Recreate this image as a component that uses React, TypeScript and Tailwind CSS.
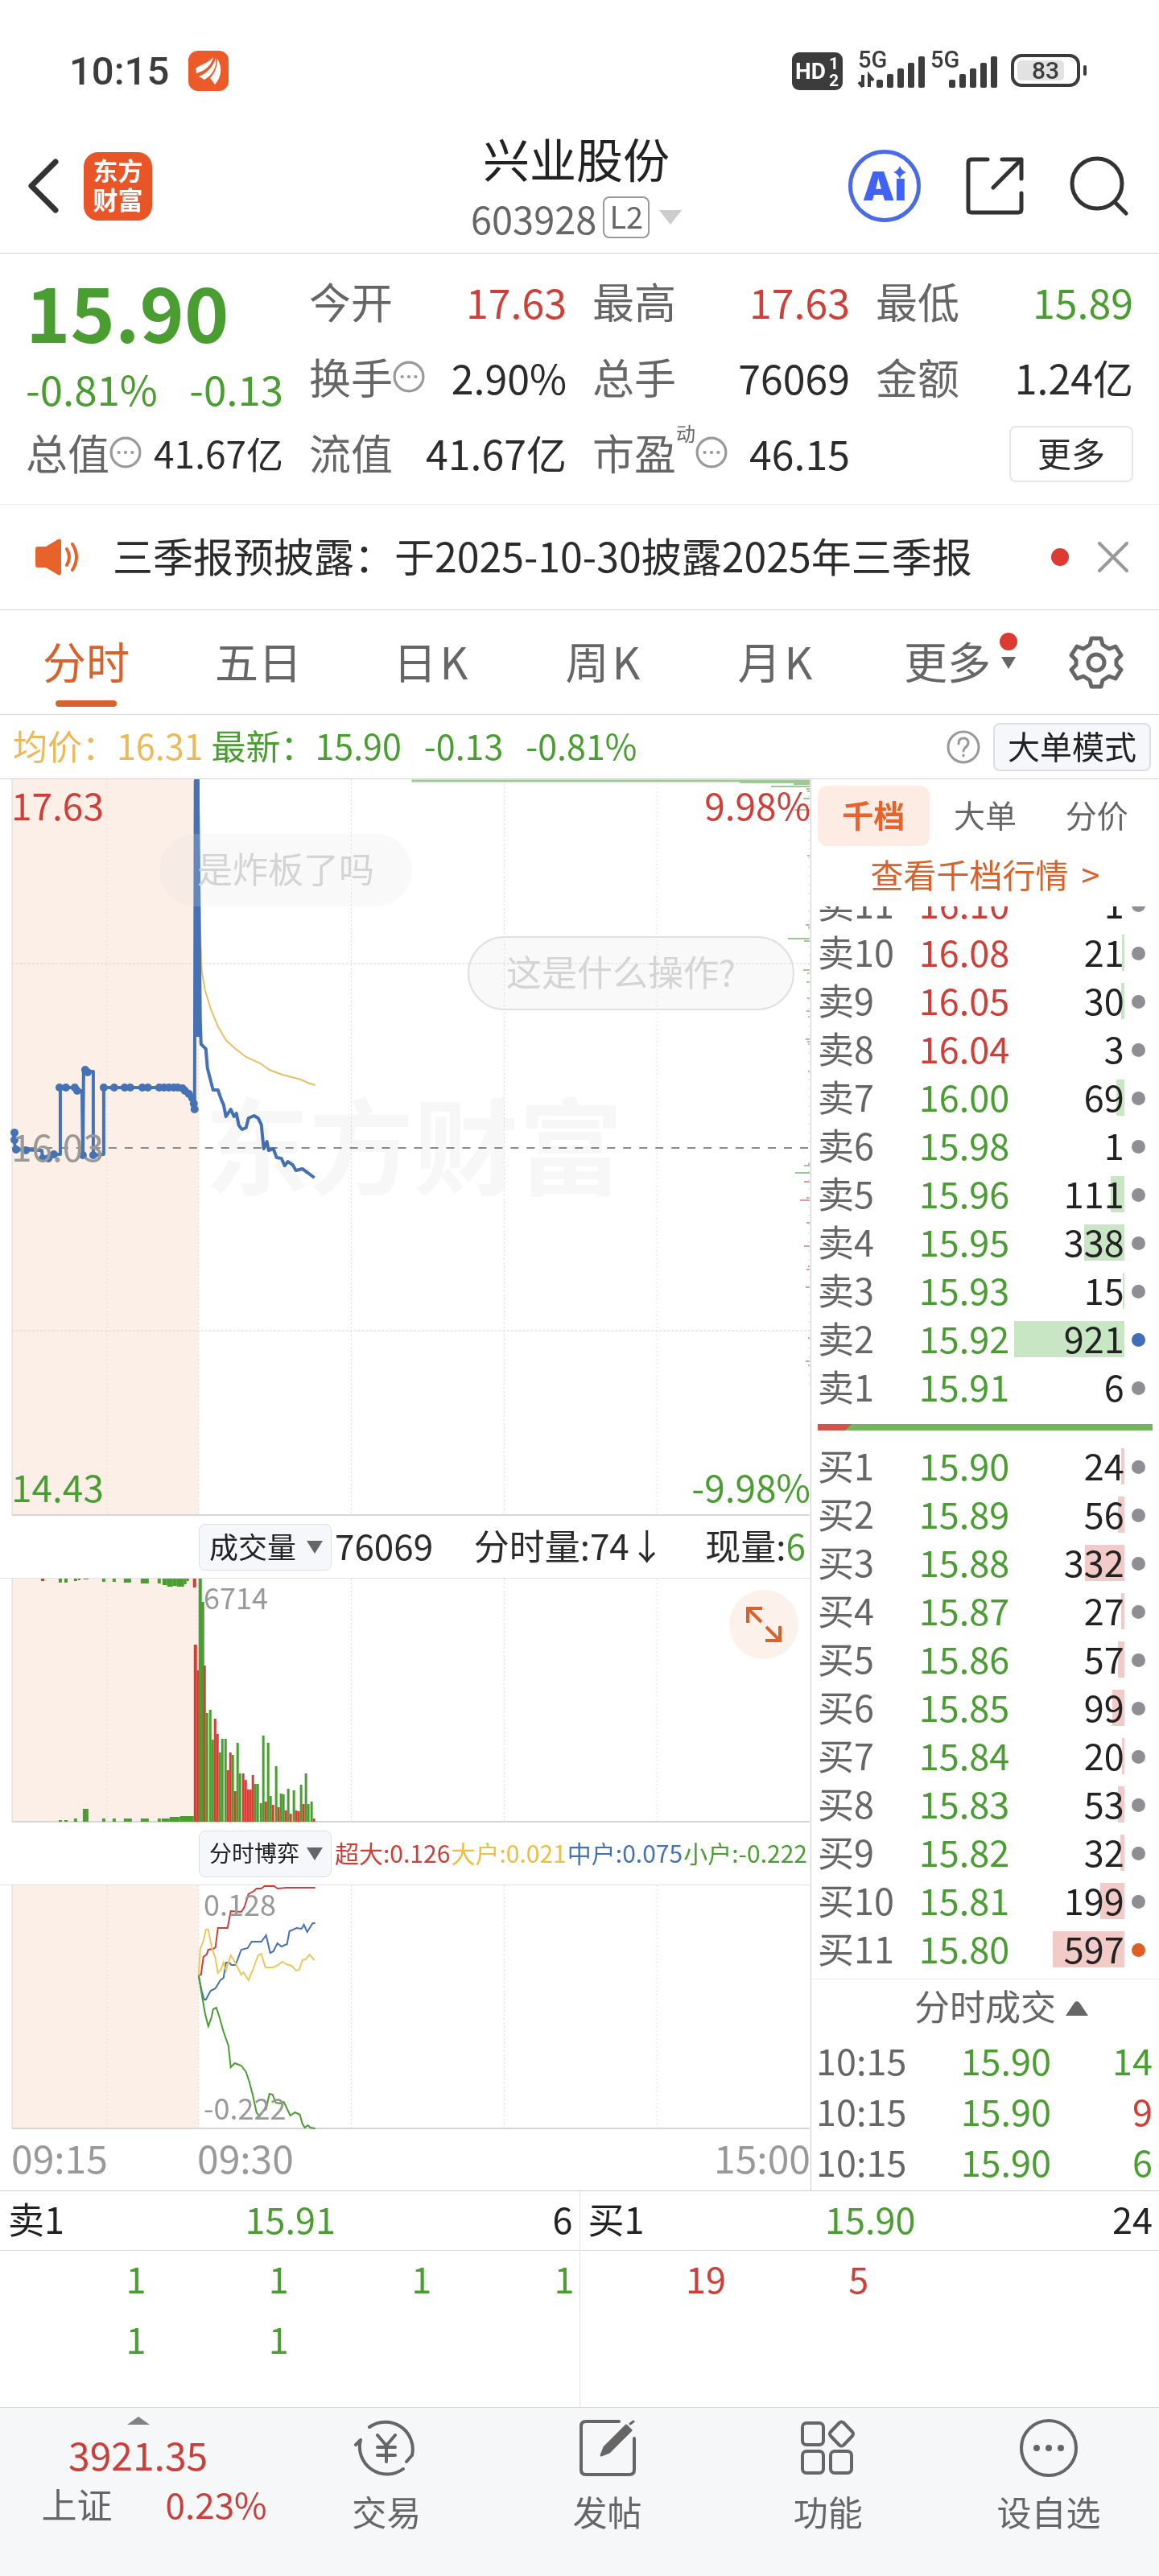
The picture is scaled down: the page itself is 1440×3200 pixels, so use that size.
import React, { useState } from "react";

const RED = "#c9403a";
const GREEN = "#4a9d31";

type Tone = "red" | "green" | "dark";
const toneClass: Record<Tone, string> = {
  red: "text-[#cf3f38]",
  green: "text-[#4a9d31]",
  dark: "text-[#2b2b2b]",
};

/* ---------- status bar ---------- */

function Signal({ data }: { data?: boolean }) {
  return (
    <svg width="84" height="50" viewBox="0 0 84 50" className="overflow-visible" aria-hidden="true">
      <text x="0" y="21" fontFamily="Roboto, sans-serif" fontWeight="500" fontSize="29" fill="#3c3c3c">
        5G
      </text>
      {data && (
        <g stroke="#3c3c3c" strokeWidth="4" fill="none">
          <path d="M6 30v15M1 39l5 6" />
          <path d="M14 45V31l5 6" />
        </g>
      )}
      <g fill="#3c3c3c">
        <rect x="23" y="36" width="8" height="10" rx="2" />
        <rect x="36" y="29" width="8" height="17" rx="2" />
        <rect x="49" y="22" width="8" height="24" rx="2" />
        <rect x="62" y="15" width="8" height="31" rx="2" />
        <rect x="75" y="7" width="8" height="39" rx="2" />
      </g>
    </svg>
  );
}

function StatusBar() {
  return (
    <div className="flex h-[148px] items-center justify-between pt-7 pr-[88px] pl-[86px]">
      <div className="flex items-center gap-6">
        <span className="font-['Roboto'] text-[49px] leading-none font-medium text-[#3c3c3c]">10:15</span>
        <svg width="50" height="50" viewBox="0 0 50 50" aria-hidden="true">
          <rect width="50" height="50" rx="12" fill="#ec5a2a" />
          <g fill="#fff">
            <path d="M9 22C15 17 24 16 31 8c-2 9-8 16-21 20z" />
            <path d="M13 32C23 28 31 20 34 9c2 12-5 22-14 27z" />
            <path d="M27 34c6-6 9-15 9-24 7 11 5 23-3 32z" />
          </g>
        </svg>
      </div>
      <div className="flex items-center">
        <svg width="64" height="48" viewBox="0 0 64 48" aria-hidden="true">
          <rect width="63" height="47" y="1" rx="9" fill="#3c3c3c" />
          <g fill="#fff" fontFamily="Roboto, sans-serif" fontWeight="700">
            <text x="4" y="34" fontSize="28">HD</text>
            <text x="46" y="22" fontSize="21">1</text>
            <text x="46" y="43" fontSize="21">2</text>
          </g>
        </svg>
        <span className="ml-[18px] flex gap-1.5">
          <Signal data />
          <Signal />
        </span>
        <svg className="ml-4" width="96" height="42" viewBox="0 0 96 42" aria-hidden="true">
          <rect x="2" y="2" width="82" height="37" rx="11" fill="none" stroke="#3c3c3c" strokeWidth="4" />
          <rect x="8" y="8" width="58" height="25" rx="5" fill="#e2e2e2" />
          <rect x="90" y="14" width="4" height="13" rx="2" fill="#3c3c3c" />
          <text x="43" y="31" textAnchor="middle" fontFamily="Roboto, sans-serif" fontWeight="500" fontSize="30" fill="#3c3c3c">
            83
          </text>
        </svg>
      </div>
    </div>
  );
}

/* ---------- header ---------- */

function Header() {
  return (
    <header className="grid h-[167px] grid-cols-[1fr_auto_1fr] items-center border-b border-[#d6d6d6] pr-[38px] pl-[30px]">
      <div className="flex items-center gap-7">
        <button aria-label="返回">
          <svg width="46" height="72" viewBox="0 0 46 72" fill="none" stroke="#333" strokeWidth="7" strokeLinecap="round" strokeLinejoin="round">
            <path d="M39 6 9 36l30 30" />
          </svg>
        </button>
        <div className="grid size-[85px] place-content-center rounded-[18px] bg-[#ea5528] pb-1 text-center text-[31px] leading-[36px] font-bold text-white">
          <span>东方</span>
          <span>财富</span>
        </div>
      </div>
      <div className="pt-1 text-center">
        <h1 className="text-[58px] leading-[74px] text-[#222]">兴业股份</h1>
        <div className="flex h-[74px] items-center justify-center gap-2 text-[47px] text-[#666]">
          <span className="leading-none">603928</span>
          <span className="flex h-[52px] items-center rounded-lg border-2 border-[#999] px-1.5 pb-1 text-[38px] leading-none">L2</span>
          <svg className="ml-1" width="28" height="18" viewBox="0 0 28 18" aria-hidden="true">
            <path d="M0 0h28L14 18z" fill="#ccc" />
          </svg>
        </div>
      </div>
      <div className="flex items-center justify-end gap-14">
        <button aria-label="AI 助手" className="relative flex size-[90px] items-center justify-center rounded-full border-[5px] border-[#4a6be8]">
          <span className="font-['Inter'] text-[50px] leading-none font-black text-[#4062f5]">Ai</span>
          <svg className="absolute top-[15px] right-[13px] bg-white" width="16" height="16" viewBox="0 0 16 16" aria-hidden="true">
            <path d="M8 0q2 6 8 8-6 2-8 8-2-6-8-8 6-2 8-8z" fill="#4062f5" />
          </svg>
        </button>
        <button aria-label="分享">
          <svg width="72" height="72" viewBox="0 0 72 72" fill="none" stroke="#333" strokeWidth="5" strokeLinecap="round" strokeLinejoin="round">
            <path d="M27 3H7q-4 0-4 4v58q0 4 4 4h58q4 0 4-4V45" />
            <path d="M45 3h24v24M69 3 34 38" />
          </svg>
        </button>
        <button aria-label="搜索">
          <svg width="74" height="74" viewBox="0 0 74 74" fill="none" stroke="#333" strokeWidth="5" strokeLinecap="round">
            <circle cx="35" cy="34" r="31" />
            <path d="m57 57 14 14" />
          </svg>
        </button>
      </div>
    </header>
  );
}

/* ---------- key figures ---------- */

function InfoDots() {
  return (
    <svg width="40" height="40" viewBox="0 0 38 38" aria-hidden="true">
      <circle cx="19" cy="19" r="17" fill="none" stroke="#999" strokeWidth="3" />
      <g fill="#999">
        <circle cx="11" cy="19" r="2" />
        <circle cx="19" cy="19" r="2" />
        <circle cx="27" cy="19" r="2" />
      </g>
    </svg>
  );
}

function Stat({ label, value, tone = "dark", info, sup, small }: { label: string; value: string; tone?: Tone; info?: boolean; sup?: string; small?: boolean }) {
  return (
    <div className="flex h-[94px] items-center justify-between pb-1 leading-none whitespace-nowrap">
      <span className="flex items-center text-[52px] text-[#666]">
        {label}
        {sup && <sup className="mb-6 self-start text-2xl">{sup}</sup>}
        {info && <InfoDots />}
      </span>
      <span className={`${small ? "text-[46px]" : "text-[50px]"} ${toneClass[tone]}`}>{value}</span>
    </div>
  );
}

function Figures() {
  return (
    <section className="grid grid-cols-4 gap-x-8 border-b border-[#eaeaea] px-8 pt-[14px] pb-[15px]">
      <div>
        <div className="flex h-[124px] items-center pb-3 text-[94px] leading-none font-bold text-[#4a9d31]">15.90</div>
        <div className="flex h-16 items-center justify-between pb-1.5 text-[51px] leading-none text-[#4a9d31]">
          <span>-0.81%</span>
          <span>-0.13</span>
        </div>
        <Stat label="总值" value="41.67亿" info small />
      </div>
      <div>
        <Stat label="今开" value="17.63" tone="red" />
        <Stat label="换手" value="2.90%" info />
        <Stat label="流值" value="41.67亿" />
      </div>
      <div>
        <Stat label="最高" value="17.63" tone="red" />
        <Stat label="总手" value="76069" />
        <Stat label="市盈" value="46.15" sup="动" info />
      </div>
      <div>
        <Stat label="最低" value="15.89" tone="green" />
        <Stat label="金额" value="1.24亿" />
        <div className="flex h-[94px] items-center justify-end">
          <button className="h-[70px] w-[154px] rounded-lg border-2 border-[#e6e6e6] pb-1 text-[42px] leading-none text-[#2b2b2b]">更多</button>
        </div>
      </div>
    </section>
  );
}

function Notice() {
  return (
    <section className="flex h-[131px] items-center border-b border-[#d6d6d6] pr-[38px] pl-[42px]">
      <svg width="58" height="48" viewBox="0 0 58 48" aria-hidden="true">
        <path d="M2 14q0-3 3-3h10L30 2q4-2 4 3v38q0 5-4 3L15 37H5q-3 0-3-3z" fill="#e8622c" />
        <path d="M41 14q6 10 0 20M48 8q10 16 0 32" fill="none" stroke="#e8622c" strokeWidth="4" strokeLinecap="round" />
      </svg>
      <a href="#notice" className="ml-10 flex-1 pb-1.5 text-[50px] leading-none whitespace-nowrap text-[#2b2b2b]">
        三季报预披露：于2025-10-30披露2025年三季报
      </a>
      <span className="size-[22px] rounded-full bg-[#dd3b32]" />
      <button aria-label="关闭" className="ml-9">
        <svg width="38" height="38" viewBox="0 0 38 38" stroke="#999" strokeWidth="4" strokeLinecap="round">
          <path d="m2 2 34 34M36 2 2 36" />
        </svg>
      </button>
    </section>
  );
}

/* ---------- period tabs ---------- */

function PeriodTabs() {
  const [active, setActive] = useState("分时");
  const periods = ["分时", "五日", "日K", "周K", "月K", "更多"];
  return (
    <nav className="grid h-[130px] grid-cols-[repeat(6,214fr)_156fr] border-b border-[#d6d6d6]">
      {periods.map((p) => (
        <button
          key={p}
          onClick={() => setActive(p)}
          className={`relative flex items-center justify-center gap-1 pb-1 text-[54px] leading-none ${active === p ? "text-[#d9622b]" : "text-[#666]"}`}
        >
          {p.endsWith("K") ? (
            <>
              <span>{p[0]}</span>
              <span>K</span>
            </>
          ) : (
            p
          )}
          {active === p && <span className="absolute bottom-[9px] h-2 w-[76px] rounded-full bg-[#d9622b]" />}
          {p === "更多" && (
            <span className="absolute top-[28px] right-5 flex flex-col items-center gap-2">
              <span className="size-[22px] rounded-full bg-[#dd3b32]" />
              <svg width="18" height="15" viewBox="0 0 18 15" aria-hidden="true">
                <path d="M0 0h18L9 15z" fill="#666" />
              </svg>
            </span>
          )}
        </button>
      ))}
      <button aria-label="设置" className="flex items-center justify-center">
        <svg width="68" height="68" viewBox="0 0 68 68" fill="none" stroke="#666" strokeWidth="5" strokeLinejoin="round">
          <path d="M28 4h12l2 8 8 5 8-3 7 11-6 6v6l6 6-7 11-8-3-8 5-2 8H28l-2-8-8-5-8 3L3 43l6-6v-6l-6-6 7-11 8 3 8-5z" />
          <circle cx="34" cy="34" r="10" />
        </svg>
      </button>
    </nav>
  );
}

function PriceSummary() {
  return (
    <div className="flex h-[80px] items-center border-b border-[#d0d0d0] pr-[10px] pl-4 text-[43px] leading-none whitespace-nowrap">
      <span className="pb-1 text-[#ecb958]">均价：16.31</span>
      <span className="ml-2.5 flex gap-7 pb-1 text-[#4a9d31]">
        <span>最新：15.90</span>
        <span>-0.13</span>
        <span>-0.81%</span>
      </span>
      <button aria-label="说明" className="ml-auto">
        <svg width="42" height="42" viewBox="0 0 42 42" fill="none" stroke="#999" strokeWidth="3" strokeLinecap="round">
          <circle cx="21" cy="21" r="19" />
          <path d="M15 17q0-7 6-7t6 6q0 3-4 6-2 2-2 4M21 31v1" />
        </svg>
      </button>
      <button className="ml-4 h-[60px] rounded-lg border-2 border-[#dcdee2] bg-[#f6f7fa] px-4 pb-1 text-[40px] leading-none text-[#222]">大单模式</button>
    </div>
  );
}

/* ---------- charts ---------- */

const GRID_X = [133, 247, 437, 627, 817];

function Frame({ height }: { height: number }) {
  return (
    <>
      <rect x="15" y="0" width="232" height={height} fill="#fcefe7" />
      <g stroke="#dcdcdc" strokeWidth="1" strokeDasharray="2 3">
        {GRID_X.map((x) => (
          <path key={x} d={`M${x} 0V${height}`} />
        ))}
      </g>
      <path d={`M15 0V${height}`} stroke="#d9d9d9" strokeWidth="1" />
      <path d={`M15 ${height - 1}H1007`} stroke="#d6d6d6" strokeWidth="2" />
    </>
  );
}

const PRICE_PATH =
  "M17 439 19 460 52 461 53 471 63 471 66 466 75 466 75 383 94 383 97 387 102 387 103 467 104 363 116 363 116 467 129 466 129 383 227 383 235 389 240 395 242 410 243 2 246 2 249 300 250 329 256 335 258 359 265 386 271 386 276 400 278 404 281 419 287 410 291 419 294 415 297 430 301 435 306 433 309 421 316 418 321 421 325 429 328 459 332 450 334 461 340 459 344 470 350 471 354 480 358 475 364 479 368 486 376 484 383 489 391 495";

const AVG_PATH =
  "M247 60 249 189 251 239 255 262 262 285 271 307 281 324 293 335 306 345 324 353 335 361 351 367 374 373 385 378 392 380";

const PRICE_DOTS: [number, number][] = [
  [18, 439], [18, 448], [20, 460], [32, 461], [53, 471], [60, 471], [67, 466], [74, 383], [82, 383], [93, 383], [96, 387],
  [106, 361], [109, 364], [103, 467], [116, 467], [129, 383], [142, 383], [155, 383], [162, 383], [177, 383], [184, 383],
  [198, 383], [204, 383], [210, 383], [216, 383], [221, 383], [227, 384], [230, 387], [235, 391], [239, 396], [241, 403], [242, 410],
];

const TURNOVER: [number, number][] = [
  [4, 87], [6, 20], [9, 48], [12, 4], [15, 3], [24, 8], [38, 19], [95, 3], [181, 5], [184, 2], [198, 27], [201, 7], [237, 8],
  [241, 3], [252, 4], [272, 3], [288, 4], [295, 2], [323, 5], [326, 3], [329, 2], [363, 2], [478, 2], [480, 7], [489, 18],
  [500, 7], [520, 4], [523, 12], [551, 4], [580, 7], [605, 2], [609, 4], [631, 5], [694, 2], [723, 5], [728, 2],
];

function PriceChart() {
  return (
    <div className="relative h-[915px] overflow-hidden text-[46px] leading-none">
      <div className="absolute top-[384px] left-[254px] text-[130px] leading-none font-bold text-[#f7f7f7]">东方财富</div>
      <svg className="absolute inset-0 h-full w-full mix-blend-multiply" viewBox="0 0 1008 915" preserveAspectRatio="none" role="img" aria-label="分时走势">
        <Frame height={915} />
        <path d="M15 229H1007M15 685H1007" stroke="#d5d5d5" strokeDasharray="3 2" />
        <path d="M15 458H1007" stroke="#8b8b8b" strokeWidth="2" strokeDasharray="10 10" />
        <path d="M512 2H1007" stroke="#9dc893" strokeWidth="3" />
        {TURNOVER.map(([y, w]) => (
          <path key={y} d={`M${1007 - w} ${y}H1007`} stroke={y < 495 ? "#9dc893" : "#dd9a96"} strokeWidth="2" />
        ))}
        <path d="M1006 20V455M1006 475V760" stroke="#cfd8cd" strokeDasharray="2 9" />
        <path d={AVG_PATH} fill="none" stroke="#e6bf66" strokeWidth="2" />
        <path d={PRICE_PATH} fill="none" stroke="#4571b5" strokeWidth="4" strokeLinejoin="round" />
        <path d="M245 0V190L247 320" fill="none" stroke="#4571b5" strokeWidth="6" />
        {PRICE_DOTS.map(([x, y]) => (
          <circle key={`${x}-${y}`} cx={x} cy={y} r="5" fill="#4571b5" />
        ))}
      </svg>
      <span className="absolute top-2 left-3.5 text-[#cf3f38]">17.63</span>
      <span className="absolute top-2 right-0 text-[#cf3f38]">9.98%</span>
      <span className="absolute top-[432px] left-3.5 text-[#999]">16.03</span>
      <span className="absolute bottom-3.5 left-3.5 text-[#4a9d31]">14.43</span>
      <span className="absolute right-0 bottom-3.5 text-[#4a9d31]">-9.98%</span>
      <span className="absolute top-[68px] left-[198px] flex h-[90px] w-[314px] items-center justify-center rounded-full bg-[#e0e0e0]/20 pb-1.5 text-[44px] text-[#d4d4d4]">
        是炸板了吗
      </span>
      <span className="absolute top-[195px] right-5 flex h-[92px] w-[406px] items-center rounded-full border-2 border-[#e0e0e0] bg-[#e0e0e0]/20 pb-1.5 pl-[46px] text-[44px] text-[#d4d4d4]">
        这是什么操作?
      </span>
    </div>
  );
}

function IndicatorSelect({ id, options, tight }: { id: string; options: string[]; tight?: boolean }) {
  return (
    <span className="relative inline-flex h-[58px] w-[165px] shrink-0 items-center rounded-lg border border-[#dcdee2] bg-[#f6f7fa]">
      <label htmlFor={id} className="sr-only">
        指标
      </label>
      <select id={id} className={`h-full w-full appearance-none pb-1 pl-3 text-[#222] ${tight ? "text-[28px]" : "text-4xl"}`}>
        {options.map((o) => (
          <option key={o}>{o}</option>
        ))}
      </select>
      <svg className="pointer-events-none absolute right-2.5" width="20" height="16" viewBox="0 0 20 16" aria-hidden="true">
        <path d="M0 0h20L10 16z" fill="#666" />
      </svg>
    </span>
  );
}

/* one entry per minute from 09:30: direction and bar height */
const VOLUME: [string, number][] = [
  ["g", 302], ["g", 273], ["r", 194], ["g", 135], ["g", 139], ["g", 102], ["r", 128], ["r", 109], ["g", 86], ["g", 103],
  ["g", 103], ["r", 64], ["r", 86], ["g", 83], ["r", 38], ["g", 98], ["g", 60], ["r", 60], ["r", 52], ["r", 40], ["r", 40],
  ["r", 58], ["g", 47], ["g", 47], ["g", 23], ["g", 107], ["r", 25], ["g", 98], ["g", 32], ["r", 21], ["g", 69], ["r", 18],
  ["g", 35], ["g", 34], ["r", 14], ["g", 41], ["r", 10], ["g", 39], ["r", 14], ["r", 13], ["g", 46], ["r", 22], ["g", 60],
  ["g", 22], ["g", 25], ["r", 4],
];

/* pre-open auction: x, width, height */
const AUCTION_TOP: [number, number, number][] = [
  [73, 4, 5], [80, 4, 5], [92, 4, 3], [97, 3, 2], [104, 6, 1], [127, 4, 4], [140, 4, 4], [154, 9, 5], [175, 10, 6], [196, 4, 6],
  [202, 6, 8], [208, 7, 10], [215, 5, 9], [220, 9, 10], [229, 3, 7], [232, 3, 3],
];
const AUCTION_BOTTOM: [number, number, number][] = [
  [73, 4, 2], [80, 4, 2], [92, 4, 4], [103, 7, 16], [127, 4, 4], [140, 4, 4], [154, 10, 4], [175, 10, 4], [196, 4, 4],
  [201, 10, 4], [211, 13, 6], [224, 17, 7],
];

function VolumeChart() {
  return (
    <div className="relative h-[304px] border-t border-[#e2e2e2]">
      <svg className="absolute inset-0 h-full w-full" viewBox="0 0 1008 303" preserveAspectRatio="none" role="img" aria-label="成交量">
        <Frame height={303} />
        {AUCTION_TOP.map(([x, w, h]) => (
          <rect key={x} x={x} y="0" width={w} height={h} fill={GREEN} />
        ))}
        {AUCTION_BOTTOM.map(([x, w, h]) => (
          <rect key={x} x={x} y={302 - h} width={w} height={h} fill={GREEN} />
        ))}
        <path d="M51 1h4M242 0v11" stroke="#dd3b32" strokeWidth="4" />
        <rect x="241" y="82" width="4" height="220" fill="#dd3b32" />
        <rect x="245" y="114" width="3" height="188" fill="#dd3b32" />
        {VOLUME.map(([dir, h], i) => {
          const x = 247 + Math.round(i * 3.15);
          return <rect key={i} x={x} y={302 - h} width={i < 2 ? 4 : 3} height={h} fill={dir === "g" ? GREEN : "#dd3b32"} />;
        })}
      </svg>
      <span className="absolute top-1 left-[253px] text-4xl leading-none text-[#999]">6714</span>
      <button aria-label="放大" className="absolute top-[14px] right-[15px] flex size-[86px] items-center justify-center rounded-full bg-[#fcf2eb]">
        <svg width="44" height="44" viewBox="0 0 44 44" fill="none" stroke="#d9622b" strokeWidth="4">
          <path d="M2 20V2h18M2 2l17 17M42 24v18H24M42 42 25 25" />
        </svg>
      </button>
    </div>
  );
}

const FLOWS = [
  {
    color: RED,
    d: "M247 112 250 111 253 89 257 86 259 80 265 79 268 77 271 53 283 53 287 32 300 33 304 27 309 11 316 7 319 4 325 4 329 1 341 1 345 4 357 3 392 3",
  },
  {
    color: "#4571b5",
    d: "M247 112 251 132 254 142 256 142 262 131 268 128 274 118 278 115 281 96 285 96 288 99 293 99 300 80 308 78 313 70 325 70 331 62 336 84 340 82 345 72 350 76 357 73 360 57 369 53 375 54 378 49 382 58 389 47 392 47",
  },
  {
    color: "#ebc85a",
    d: "M247 112 249 79 253 69 256 55 259 55 263 76 268 91 271 109 275 104 278 96 281 106 287 87 293 97 300 111 303 108 309 118 314 106 321 87 325 85 330 102 340 102 346 99 351 95 356 98 363 100 368 106 372 105 376 93 380 92 385 86 391 93",
  },
  {
    color: GREEN,
    d: "M247 112 251 136 255 159 259 175 263 164 265 154 269 152 273 164 278 182 284 199 287 226 292 221 300 224 306 232 310 244 314 259 319 282 323 287 327 281 331 278 335 259 339 260 343 270 349 271 353 269 361 286 367 282 373 285 376 296 379 301 383 298 386 301 392 302",
  },
];

function FlowChart() {
  return (
    <div className="relative h-[304px] border-t border-[#e2e2e2] text-4xl leading-none text-[#999]">
      <svg className="absolute inset-0 h-full w-full" viewBox="0 0 1008 303" preserveAspectRatio="none" role="img" aria-label="分时博弈">
        <Frame height={303} />
        {FLOWS.map((f) => (
          <path key={f.color} d={f.d} fill="none" stroke={f.color} strokeWidth="2" />
        ))}
      </svg>
      <span className="absolute top-1 left-[253px]">0.128</span>
      <span className="absolute bottom-2.5 left-[253px]">-0.222</span>
    </div>
  );
}

function Charts() {
  return (
    <div className="min-w-0 flex-1 border-r border-[#ccc]">
      <PriceChart />
      <div className="flex h-[77px] items-center pl-[247px] text-[44px] leading-none whitespace-nowrap text-[#2b2b2b]">
        <IndicatorSelect id="indicator-1" options={["成交量", "成交额"]} />
        <span className="flex flex-1 justify-between pr-1.5 pb-1.5 pl-1">
          <span>76069</span>
          <span>分时量:74↓</span>
          <span>
            现量:<span className="text-[#4a9d31]">6</span>
          </span>
        </span>
      </div>
      <VolumeChart />
      <div className="flex h-[77px] items-center pl-[247px] text-[30px] leading-none whitespace-nowrap">
        <IndicatorSelect id="indicator-2" options={["分时博弈", "资金流"]} tight />
        <span className="flex flex-1 justify-between pr-1 pb-1 pl-1">
          <span className="text-[#cf3f38]">超大:0.126</span>
          <span className="text-[#ebc040]">大户:0.021</span>
          <span className="text-[#4571b5]">中户:0.075</span>
          <span className="text-[#4a9d31]">小户:-0.222</span>
        </span>
      </div>
      <FlowChart />
      <div className="flex h-[76px] items-center pb-2 pl-3.5 text-[48px] leading-none text-[#999]">
        <span className="w-[231px]">09:15</span>
        <span>09:30</span>
        <span className="ml-auto">15:00</span>
      </div>
    </div>
  );
}

/* ---------- order book ---------- */

type Level = { name: string; price: string; qty: number; tone?: Tone; dot?: "blue" | "orange" };

const SELLS: Level[] = [
  { name: "卖11", price: "16.10", qty: 1, tone: "red" },
  { name: "卖10", price: "16.08", qty: 21, tone: "red" },
  { name: "卖9", price: "16.05", qty: 30, tone: "red" },
  { name: "卖8", price: "16.04", qty: 3, tone: "red" },
  { name: "卖7", price: "16.00", qty: 69 },
  { name: "卖6", price: "15.98", qty: 1 },
  { name: "卖5", price: "15.96", qty: 111 },
  { name: "卖4", price: "15.95", qty: 338 },
  { name: "卖3", price: "15.93", qty: 15 },
  { name: "卖2", price: "15.92", qty: 921, dot: "blue" },
  { name: "卖1", price: "15.91", qty: 6 },
];

const BUYS: Level[] = [
  { name: "买1", price: "15.90", qty: 24 },
  { name: "买2", price: "15.89", qty: 56 },
  { name: "买3", price: "15.88", qty: 332 },
  { name: "买4", price: "15.87", qty: 27 },
  { name: "买5", price: "15.86", qty: 57 },
  { name: "买6", price: "15.85", qty: 99 },
  { name: "买7", price: "15.84", qty: 20 },
  { name: "买8", price: "15.83", qty: 53 },
  { name: "买9", price: "15.82", qty: 32 },
  { name: "买10", price: "15.81", qty: 199 },
  { name: "买11", price: "15.80", qty: 597, dot: "orange" },
];

const dotClass = { blue: "bg-[#3f6fba]", orange: "bg-[#dc6024]", grey: "bg-[#8e8e93]" };

function Levels({ rows, side }: { rows: Level[]; side: "sell" | "buy" }) {
  return (
    <table className="w-full shrink-0 table-fixed text-[45px] leading-none">
      <colgroup>
        <col className="w-[28%]" />
        <col className="w-[29%]" />
        <col className="w-[33%]" />
        <col className="w-[10%]" />
      </colgroup>
      <tbody>
        {rows.map((r) => (
          <tr key={r.name} className="h-[60px]">
            <th scope="row" className="p-0 pb-1.5 pl-2 text-left font-normal whitespace-nowrap text-[#666]">{r.name}</th>
            <td className={`p-0 pb-1.5 text-right ${toneClass[r.tone ?? "green"]}`}>{r.price}</td>
            <td className="relative p-0 pb-1.5 text-right text-[#222]">
              {r.qty > 10 && (
                <span
                  className={`absolute top-[7px] right-0 h-[45px] ${side === "sell" ? "bg-[#c8e5c4]" : "bg-[#f2cbc9]"}`}
                  style={{ width: Math.round(r.qty * 0.149) }}
                />
              )}
              <span className="relative">{r.qty}</span>
            </td>
            <td className="p-0">
              <span className={`mx-auto mr-[17px] block size-[17px] rounded-full ${dotClass[r.dot ?? "grey"]}`} />
            </td>
          </tr>
        ))}
      </tbody>
    </table>
  );
}

function OrderBook() {
  const trades: [string, string, number, Tone][] = [
    ["10:15", "15.90", 14, "green"],
    ["10:15", "15.90", 9, "red"],
    ["10:15", "15.90", 6, "green"],
  ];
  return (
    <aside className="flex w-[30%] shrink-0 flex-col">
      <div className="mt-2 grid h-[75px] grid-cols-3 pr-2 pl-2 text-[39px] leading-none text-[#666]">
        <button className="rounded-xl bg-[#fcece4] pb-1 font-bold text-[#e8622c]">千档</button>
        <button className="pb-1">大单</button>
        <button className="pb-1">分价</button>
      </div>
      <a href="#depth" className="flex h-[75px] items-center justify-center gap-4 pb-1.5 text-[41px] leading-none text-[#d9622b]">
        <span>查看千档行情</span>
        <span>&gt;</span>
      </a>
      <div className="flex h-[628px] flex-col justify-end overflow-hidden">
        <Levels rows={SELLS} side="sell" />
      </div>
      <svg className="my-[15px] h-2 w-full px-2" viewBox="0 0 415 8" preserveAspectRatio="none" aria-hidden="true">
        <path d="M0 0h415v8H0z" fill="#73b45c" />
        <path d="M0 0h42l-8 8H0z" fill="#d1544c" />
      </svg>
      <Levels rows={BUYS} side="buy" />
      <button className="mt-1.5 flex h-[73px] items-center justify-center gap-3 border-t border-[#eaeaea] pl-10 text-[44px] leading-none text-[#666]">
        <span className="pb-2">分时成交</span>
        <svg width="28" height="18" viewBox="0 0 28 18" aria-hidden="true">
          <path d="M14 0q2 0 4 3l10 15H0L10 3q2-3 4-3z" fill="#666" />
        </svg>
      </button>
      <table className="w-full table-fixed text-[45px] leading-none">
        <colgroup>
          <col className="w-[36%]" />
          <col className="w-[33%]" />
          <col className="w-[31%]" />
        </colgroup>
        <tbody>
          {trades.map(([time, price, qty, tone]) => (
            <tr key={qty} className="h-[63px]">
              <td className="p-0 pb-2 pl-1.5 text-[#666]">{time}</td>
              <td className="p-0 pb-2 text-right text-[#4a9d31]">{price}</td>
              <td className={`p-0 pr-2 pb-2 text-right ${toneClass[tone]}`}>{qty}</td>
            </tr>
          ))}
        </tbody>
      </table>
    </aside>
  );
}

/* ---------- queues at the best price ---------- */

function Queue({ name, price, qty, orders, tone }: { name: string; price: string; qty: number; orders: number[]; tone: Tone }) {
  return (
    <div className="min-w-0 flex-1 border-r border-[#e2e2e2] text-[45px] leading-none last:border-r-0">
      <div className="grid h-[74px] grid-cols-3 items-center border-b border-[#d9d9d9] pr-2 pb-1.5 pl-2.5 text-[#222]">
        <span>{name}</span>
        <span className="text-center text-[#4a9d31]">{price}</span>
        <span className="text-right">{qty}</span>
      </div>
      <div className="grid h-[194px] auto-rows-[75px] grid-cols-4 pr-1.5 pl-1">
        {orders.map((n, i) => (
          <span key={i} className={`flex items-center justify-end pb-2 ${toneClass[tone]}`}>
            {n}
          </span>
        ))}
      </div>
    </div>
  );
}

/* ---------- bottom bar ---------- */

function NavItem({ label, children }: { label: string; children: React.ReactNode }) {
  return (
    <button className="flex flex-col items-center justify-start pt-2.5 text-[43px] leading-none text-[#666]">
      <svg width="80" height="80" viewBox="0 0 80 80" fill="none" stroke="#666" strokeWidth="4" strokeLinecap="round" strokeLinejoin="round" aria-hidden="true">
        {children}
      </svg>
      <span className="mt-[17px]">{label}</span>
    </button>
  );
}

function BottomBar() {
  return (
    <nav className="grid min-h-[210px] flex-1 grid-cols-[343fr_274fr_274fr_274fr_274fr] border-t border-[#d0d2d6] bg-[#f6f7f9]">
      <a href="#index" className="flex flex-col items-center pt-[11px] leading-none text-[#c9403a]">
        <svg width="28" height="10" viewBox="0 0 28 10" aria-hidden="true">
          <path d="M14 0 28 10H0z" fill="#808285" />
        </svg>
        <span className="mt-3 text-[48px]">3921.35</span>
        <span className="mt-4 flex gap-[66px] pl-10 text-[44px]">
          <span className="text-[#666]">上证</span>
          <span>0.23%</span>
        </span>
      </a>
      <NavItem label="交易">
        <path d="M19 14A34 34 0 0 1 72 49M72 49l-7 8M61 66A34 34 0 0 1 8 30M8 30l-6 6" />
        <path d="m29 24 11 13 11-13M40 37v20M29 39h22M29 49h22" />
      </NavItem>
      <NavItem label="发帖">
        <path d="M54 7H13q-6 0-6 6v54q0 6 6 6h54q6 0 6-6V28" />
        <path d="m68 10 4-3M32 49l4-10 27-27 6 6-27 27z" fill="#666" strokeWidth="3" />
      </NavItem>
      <NavItem label="功能">
        <rect x="8" y="9" width="26" height="27" rx="5" />
        <rect x="8" y="44" width="26" height="27" rx="5" />
        <rect x="43" y="44" width="26" height="27" rx="5" />
        <path d="M54 8.500 43 20q-2 2.500 0 5L54 36.500q2.500 2 5 0L70 25q2-2.500 0-5L59 8.500q-2.500-2-5 0z" />
      </NavItem>
      <NavItem label="设自选">
        <circle cx="40" cy="40" r="34" />
        <g fill="#666" stroke="none">
          <circle cx="25" cy="40" r="4" />
          <circle cx="40" cy="40" r="4" />
          <circle cx="55" cy="40" r="4" />
        </g>
      </NavItem>
    </nav>
  );
}

export default function App() {
  return (
    <div className="flex min-h-screen flex-col bg-white font-['Noto_Sans_CJK_SC',sans-serif]">
      <StatusBar />
      <Header />
      <Figures />
      <Notice />
      <PeriodTabs />
      <PriceSummary />
      <main className="flex">
        <Charts />
        <OrderBook />
      </main>
      <section className="flex border-t border-[#d0d0d0]">
        <Queue name="卖1" price="15.91" qty={6} orders={[1, 1, 1, 1, 1, 1]} tone="green" />
        <Queue name="买1" price="15.90" qty={24} orders={[19, 5]} tone="red" />
      </section>
      <BottomBar />
    </div>
  );
}
